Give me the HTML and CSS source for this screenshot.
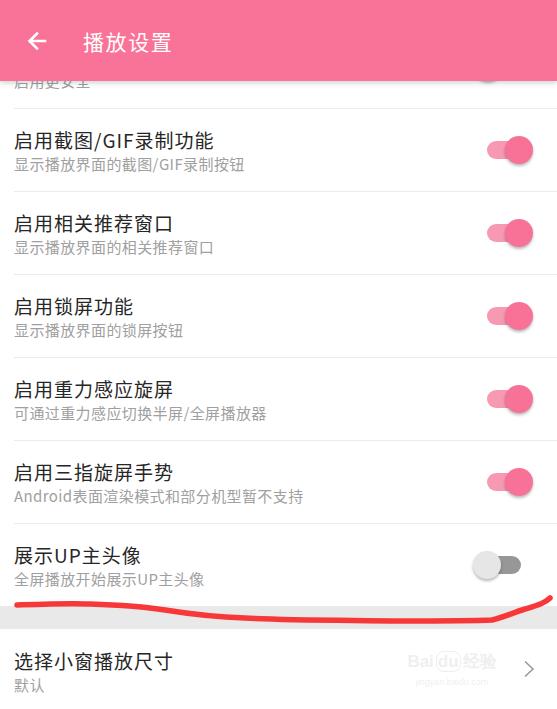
FILE: index.html
```html
<!DOCTYPE html>
<html lang="zh">
<head>
<meta charset="utf-8">
<link rel="stylesheet" href="styles.css">
</head>
<body>
<div class="page">
  <header class="appbar">
    <svg class="back" width="24" height="24" viewBox="0 0 24 24"><path d="M20 12H5M12 4.5L4.5 12 12 19.5" fill="none" stroke="#fff" stroke-width="2.6" stroke-linecap="square"/></svg>
    <span class="appbar-title">播放设置</span>
  </header>

  <div class="list">
    <div class="row">
      <div class="texts"><div class="title-space"></div><div class="sub">启用更安全</div></div>
      <div class="switch off"><span class="track"></span><span class="thumb"></span></div>
    </div>
    <div class="row">
      <div class="texts"><div class="title">启用截图/GIF录制功能</div><div class="sub">显示播放界面的截图/GIF录制按钮</div></div>
      <div class="switch on"><span class="track"></span><span class="thumb"></span></div>
    </div>
    <div class="row">
      <div class="texts"><div class="title">启用相关推荐窗口</div><div class="sub">显示播放界面的相关推荐窗口</div></div>
      <div class="switch on"><span class="track"></span><span class="thumb"></span></div>
    </div>
    <div class="row">
      <div class="texts"><div class="title">启用锁屏功能</div><div class="sub">显示播放界面的锁屏按钮</div></div>
      <div class="switch on"><span class="track"></span><span class="thumb"></span></div>
    </div>
    <div class="row">
      <div class="texts"><div class="title">启用重力感应旋屏</div><div class="sub">可通过重力感应切换半屏/全屏播放器</div></div>
      <div class="switch on"><span class="track"></span><span class="thumb"></span></div>
    </div>
    <div class="row">
      <div class="texts"><div class="title">启用三指旋屏手势</div><div class="sub">Android表面渲染模式和部分机型暂不支持</div></div>
      <div class="switch on"><span class="track"></span><span class="thumb"></span></div>
    </div>
    <div class="row last">
      <div class="texts"><div class="title">展示UP主头像</div><div class="sub">全屏播放开始展示UP主头像</div></div>
      <div class="switch off2"><span class="track"></span><span class="thumb"></span></div>
    </div>
  </div>

  <div class="band"></div>

  <div class="row nav">
    <div class="texts"><div class="title">选择小窗播放尺寸</div><div class="sub">默认</div></div>
    <svg class="chev" width="12" height="18" viewBox="0 0 12 18"><path d="M2 1.5L10 9 2 16.5" fill="none" stroke="#9a9a9a" stroke-width="1.6"/></svg>
  </div>

  <div class="watermark">
    <div class="wm-logo">Bai<span class="wm-du">du</span>经验</div>
    <div class="wm-url">jingyan.baidu.com</div>
  </div>

  <svg class="scribble" width="557" height="709" viewBox="0 0 557 709">
    <path d="M17 605 C 45 604, 70 603, 90 604 C 120 605, 140 606, 165 610 C 190 614, 215 617, 245 618 C 280 620, 320 620, 400 621 C 440 621, 470 621, 492 620 C 505 617, 512 613, 525 609 C 538 605, 545 603, 550 598" fill="none" stroke="#f83838" stroke-width="5.5" stroke-linecap="round" stroke-linejoin="round"/>
  </svg>
</div>
</body>
</html>
```

FILE: styles.css
```css
* { box-sizing: border-box; }
html, body { margin: 0; padding: 0; background: #fff; }
body {
  font-family: "Noto Sans CJK SC", "Noto Sans", Roboto, sans-serif;
  width: 557px;
  height: 709px;
  overflow: hidden;
}
.page {
  position: relative;
  width: 557px;
  height: 709px;
  overflow: hidden;
  padding-top: 26px;
}
.appbar {
  position: absolute;
  top: 0; left: 0; right: 0;
  height: 81px;
  background: #f97398;
  display: flex;
  align-items: center;
  padding-left: 25px;
  z-index: 5;
  box-shadow: 0 2px 5px rgba(0,0,0,0.18);
}
.back { flex: none; }
.appbar-title {
  color: #fff;
  font-size: 21px;
  margin-left: 34px;
  letter-spacing: 1.6px;
}
.list { display: flex; flex-direction: column; }
.row {
  position: relative;
  height: 83px;
  margin-left: 14px;
  border-bottom: 1px solid #ebebeb;
  display: flex;
  align-items: center;
  justify-content: space-between;
}
.row.last { border-bottom: none; height: 82px; }
.texts { display: flex; flex-direction: column; padding-top: 1px; }
.title {
  font-size: 19px;
  line-height: 22px;
  letter-spacing: 1px;
  color: #262626;
}
.title-space { height: 22px; }
.sub {
  font-size: 15px;
  line-height: 18px;
  letter-spacing: 0.4px;
  color: #a0a0a0;
  margin-top: 4px;
}
.switch {
  position: relative;
  width: 52px;
  height: 30px;
  margin-right: 20px;
  flex: none;
}
.switch .track {
  position: absolute;
  left: 2px; top: 6px;
  width: 38px; height: 18px;
  border-radius: 9px;
}
.switch .thumb {
  position: absolute;
  top: 1px;
  width: 28px; height: 28px;
  border-radius: 50%;
  box-shadow: 0 2px 3px rgba(0,0,0,0.28);
}
.switch.on .track { background: #f799b2; }
.switch.on .thumb { background: #f87297; left: 20px; }
.switch.off { margin-right: 34px; }
.switch.off .track { background: #9e9e9e; left: 18px; }
.switch.off .thumb { background: #ececec; left: 3px; }
.switch.off2 { margin-right: 32px; }
.switch.off2 .track { background: #979797; left: 14px; width: 34px; }
.switch.off2 .thumb { background: #e6e6e6; left: 0px; }
.band {
  height: 23px;
  background: #e9e9e9;
}
.row.nav {
  border-bottom: none;
  height: 79px;
  padding-top: 6px;
}
.chev { margin-right: 22px; flex: none; margin-top: -6px; }
.watermark {
  position: absolute;
  left: 402px;
  top: 652px;
  width: 100px;
  text-align: center;
  color: rgba(200,200,200,0.3);
  pointer-events: none;
}
.wm-logo { font-family: "Liberation Sans", sans-serif; font-size: 17px; font-weight: bold; line-height: 20px; }
.wm-du { border: 1px solid rgba(200,200,200,0.3); border-radius: 8px; padding: 0 1px; margin: 0 2px; }
.wm-url { font-family: "Liberation Sans", sans-serif; font-size: 9px; line-height: 14px; margin-top: 3px; }
.scribble {
  position: absolute;
  left: 0; top: 0;
  pointer-events: none;
  z-index: 3;
}
```
